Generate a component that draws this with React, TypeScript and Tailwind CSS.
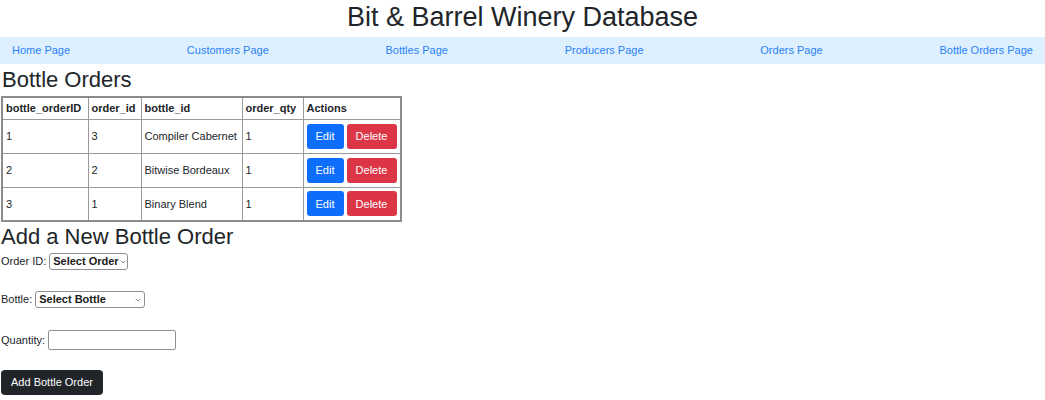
import { ChevronDown } from 'lucide-react'

interface BottleOrder {
  id: number
  orderId: number
  bottle: string
  qty: number
}

const bottleOrders: BottleOrder[] = [
  { id: 1, orderId: 3, bottle: 'Compiler Cabernet', qty: 1 },
  { id: 2, orderId: 2, bottle: 'Bitwise Bordeaux', qty: 1 },
  { id: 3, orderId: 1, bottle: 'Binary Blend', qty: 1 },
]

const navLinks = [
  'Home Page',
  'Customers Page',
  'Bottles Page',
  'Producers Page',
  'Orders Page',
  'Bottle Orders Page',
]

const cell = 'border border-[#9a9a9a] px-[3px] text-left align-middle'

function FakeSelect({ label, width }: { label: string; width: string }) {
  return (
    <div
      className={`${width} h-[17px] flex items-center justify-between border border-[#8f8f8f] rounded-[3px] bg-white pl-[3px] pr-[2px] whitespace-nowrap text-[11px] font-bold text-[#1a1a1a]`}
    >
      <span>{label}</span>
      <ChevronDown className="h-[8px] w-[8px] text-[#555] shrink-0" strokeWidth={2} />
    </div>
  )
}

export default function App() {
  return (
    <div className="w-[1045px] h-[400px] bg-white text-[#212529] text-[11px] font-['Liberation_Sans',Arial,sans-serif] overflow-hidden">
      {/* Title */}
      <div className="h-[37px] flex items-start justify-center">
        <h1 className="text-[27px] leading-[33px] pt-[1px]">Bit &amp; Barrel Winery Database</h1>
      </div>

      {/* Navigation */}
      <nav className="h-[27px] bg-[#def0fd] flex items-center justify-between px-[12px]">
        {navLinks.map((link) => (
          <a key={link} href="#" className="text-[#2a82f8] text-[11px]">
            {link}
          </a>
        ))}
      </nav>

      <h2 className="text-[22px] leading-[32px] pl-[2px]">Bottle Orders</h2>

      <table className="border-collapse border-2 border-[#8c8c8c] ml-[1px]">
        <thead>
          <tr className="h-[22px] font-bold">
            <th className={`${cell} w-[86px]`}>bottle_orderID</th>
            <th className={`${cell} w-[53px]`}>order_id</th>
            <th className={`${cell} w-[101px]`}>bottle_id</th>
            <th className={`${cell} w-[61px]`}>order_qty</th>
            <th className={`${cell} w-[97px]`}>Actions</th>
          </tr>
        </thead>
        <tbody>
          {bottleOrders.map((row) => (
            <tr key={row.id} className="h-[34px]">
              <td className={cell}>{row.id}</td>
              <td className={cell}>{row.orderId}</td>
              <td className={cell}>{row.bottle}</td>
              <td className={cell}>{row.qty}</td>
              <td className={cell}>
                <div className="flex gap-[3px]">
                  <button className="w-[37px] h-[25px] bg-[#0d6efd] text-white rounded-[3px]">Edit</button>
                  <button className="w-[50px] h-[25px] bg-[#dc3545] text-white rounded-[3px]">Delete</button>
                </div>
              </td>
            </tr>
          ))}
        </tbody>
      </table>

      <h2 className="text-[22px] leading-[29px] pl-[1px] mb-[2px]">Add a New Bottle Order</h2>

      <form className="flex flex-col items-start pl-[1px]">
        <div className="flex items-center gap-[3px] h-[17px]">
          <label>Order ID:</label>
          <FakeSelect label="Select Order" width="w-[79px]" />
        </div>
        <div className="flex items-center gap-[3px] h-[17px] mt-[21px]">
          <label>Bottle:</label>
          <FakeSelect label="Select Bottle" width="w-[110px]" />
        </div>
        <div className="flex items-center gap-[3px] h-[20px] mt-[22px]">
          <label>Quantity:</label>
          <input type="number" className="w-[128px] h-[20px] border border-[#8f8f8f] rounded-[2px] bg-white" />
        </div>
        <button
          type="button"
          className="mt-[20px] h-[25px] px-[10px] bg-[#212529] text-white rounded-[4px]"
        >
          Add Bottle Order
        </button>
      </form>
    </div>
  )
}
